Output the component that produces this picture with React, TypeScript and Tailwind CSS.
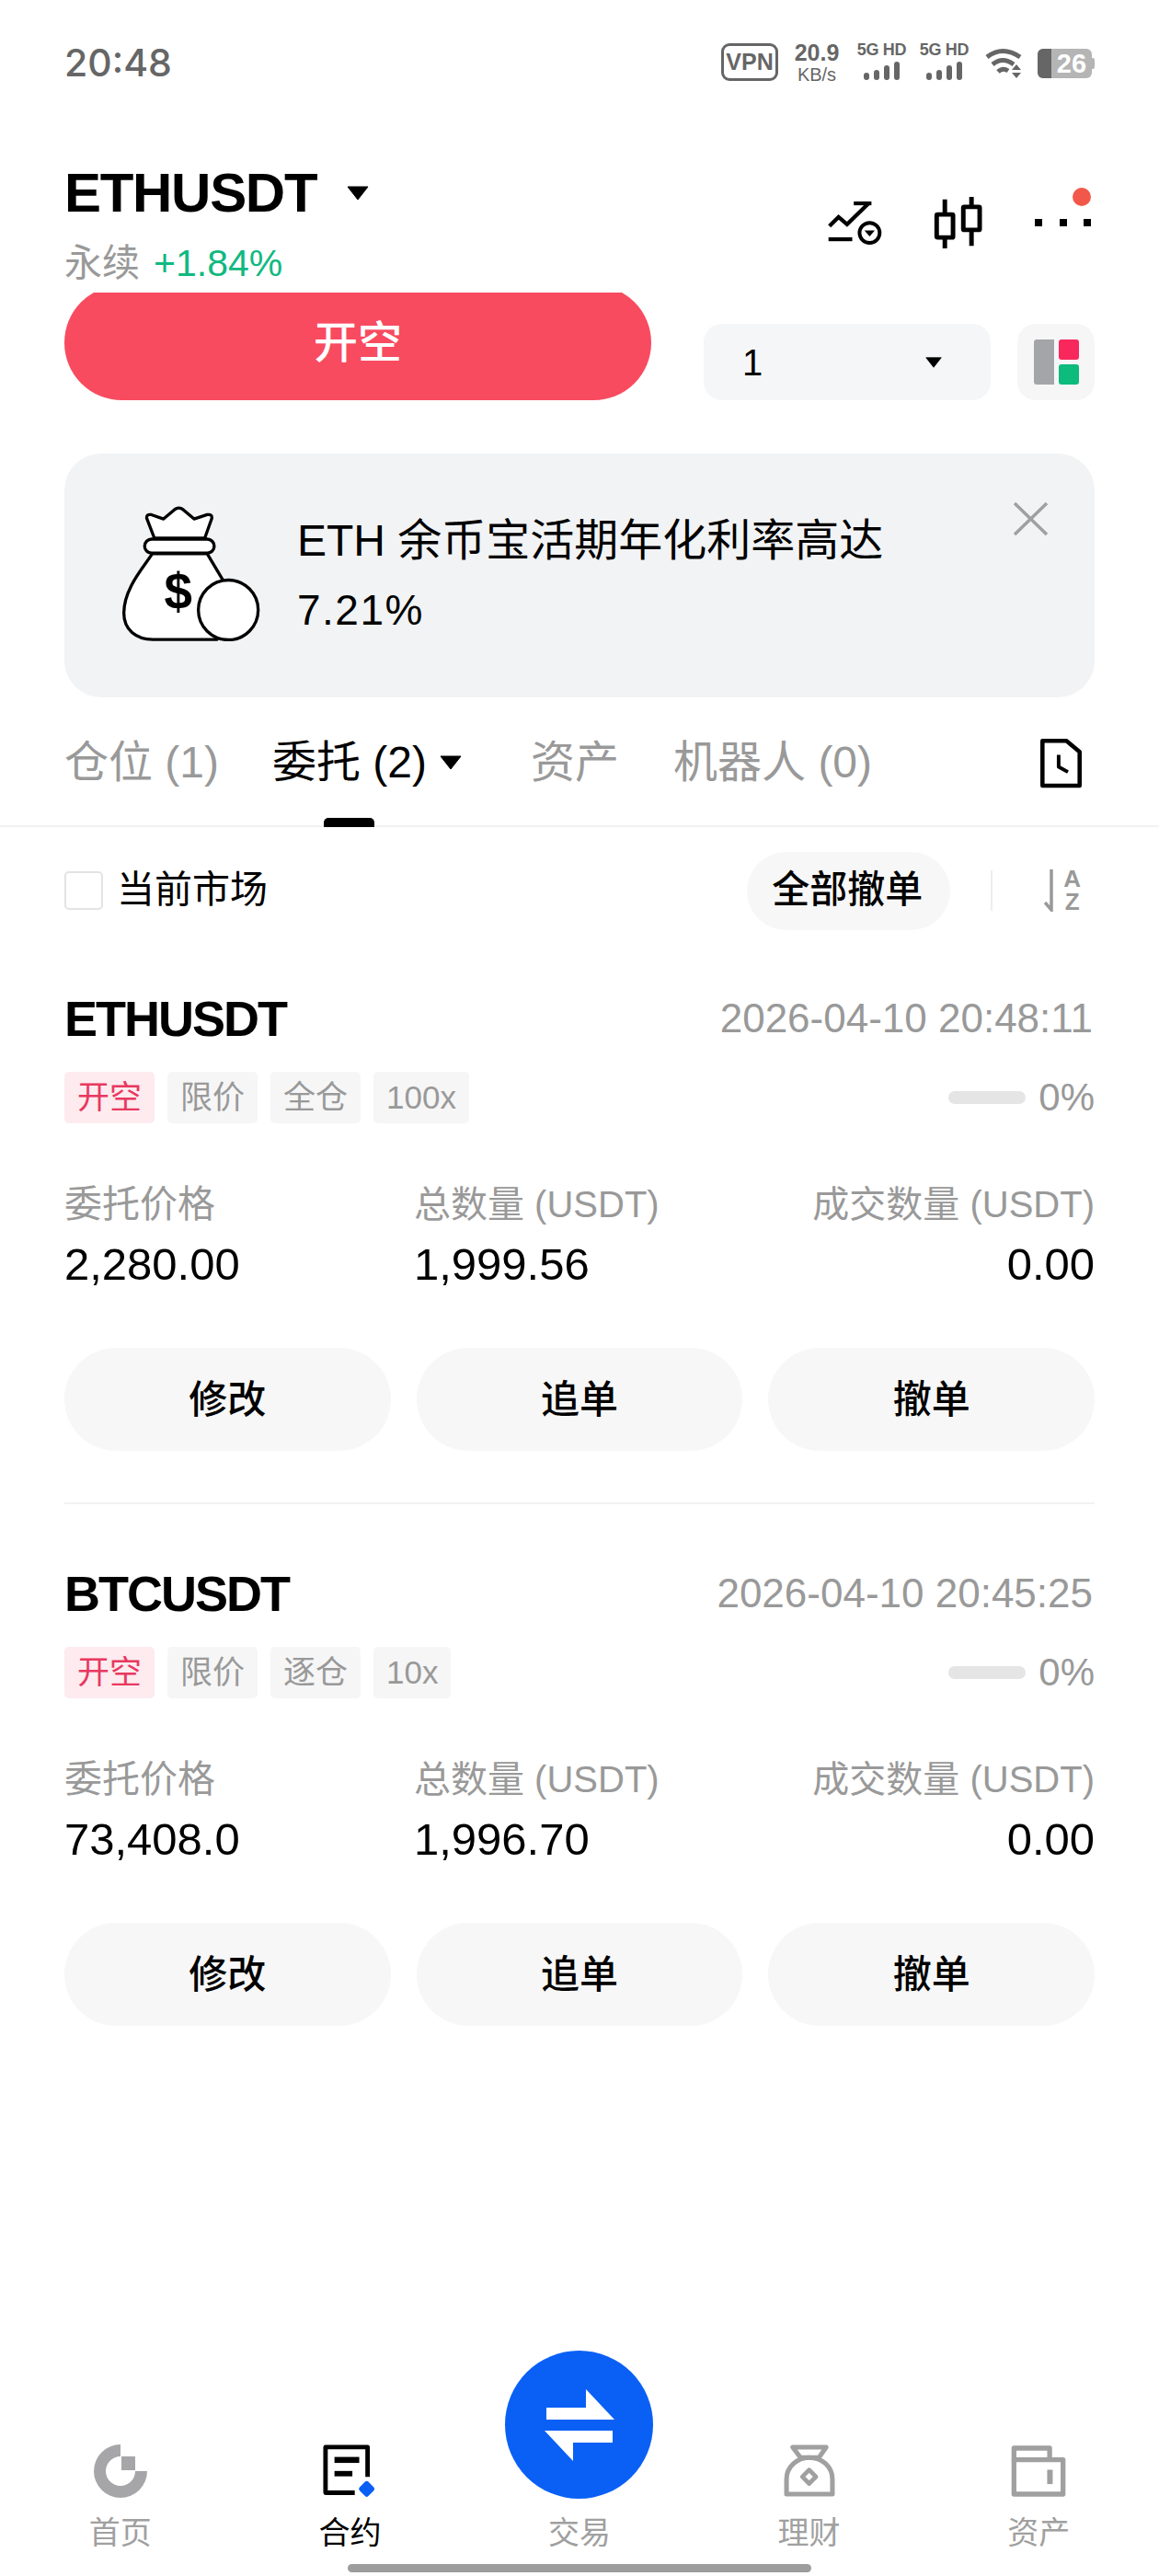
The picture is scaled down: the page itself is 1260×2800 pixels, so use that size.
import type { ReactNode } from "react";

type Order = {
  symbol: string;
  time: string;
  margin: string;
  leverage: string;
  price: string;
  amount: string;
};

const ORDERS: Order[] = [
  { symbol: "ETHUSDT", time: "2026-04-10 20:48:11", margin: "全仓", leverage: "100x", price: "2,280.00", amount: "1,999.56" },
  { symbol: "BTCUSDT", time: "2026-04-10 20:45:25", margin: "逐仓", leverage: "10x", price: "73,408.0", amount: "1,996.70" },
];

function Caret({ className }: { className: string }) {
  return (
    <svg viewBox="0 0 24 16" className={className}>
      <path d="M1 1h22L12 15z" fill="#000" stroke="#000" strokeLinejoin="round" />
    </svg>
  );
}

function Signal() {
  return (
    <div className="flex h-[20px] items-end justify-center gap-[5px]">
      <div className="h-[8px] w-[6px] rounded-[3px] bg-[#666]" />
      <div className="h-[11px] w-[6px] rounded-[3px] bg-[#666]" />
      <div className="h-[16px] w-[6px] rounded-[3px] bg-[#666]" />
      <div className="h-[20px] w-[6px] rounded-[3px] bg-[#666]" />
    </div>
  );
}

function Network() {
  return (
    <div className="flex w-[57px] flex-col gap-[5px]">
      <div className="whitespace-nowrap text-center text-[18px] font-bold leading-[15px] tracking-[-0.3px] text-[#666]">5G HD</div>
      <Signal />
    </div>
  );
}

function StatusBar() {
  return (
    <div className="flex h-[180px] items-start justify-between px-[70px] pt-[47px]">
      <div className="h-[42px] font-['Inter'] text-[41px] font-medium leading-[42px] text-[#666]">20:48</div>
      <div className="flex items-start">
        <div className="flex h-[41px] w-[62px] items-center justify-center rounded-[9px] border-[3px] border-[#666] text-[25px] font-bold text-[#666]">
          VPN
        </div>
        <div className="ml-[16px] -mt-[3px] w-[52px] text-center text-[#666]">
          <div className="text-[25px] font-bold leading-[26px]">20.9</div>
          <div className="text-[20px] leading-[22px]">KB/s</div>
        </div>
        <div className="ml-[16px]">
          <Network />
        </div>
        <div className="ml-[11px]">
          <Network />
        </div>
        <svg viewBox="0 0 42 33" className="ml-[16px] mt-[5px] h-[33px] w-[42px]" fill="none" stroke="#666" strokeWidth="5">
          <path d="M2 10Q19-3 38 10" />
          <path d="M8 18Q19 9 31 18" />
          <path d="M14 26Q19 21 25 25" />
          <path d="M34 18l5 6h-10zM34 33l5-6h-10z" fill="#666" stroke="none" />
        </svg>
        <div className="relative ml-[15px] mt-[6px] flex h-[32px] w-[59px] overflow-hidden rounded-[6px] bg-[#b5b5b5]">
          <div className="h-full w-[15px] bg-[#666]" />
          <div className="flex-1 text-center text-[29px] font-bold leading-[32px] text-white">26</div>
        </div>
        <div className="mt-[16px] h-[12px] w-[3px] rounded-r-[2px] bg-[#b5b5b5]" />
      </div>
    </div>
  );
}

function Header() {
  return (
    <div className="flex items-start justify-between pl-[70px] pr-[74px]">
      <div>
        <div className="flex h-[60px] items-center">
          <span className="text-[60px] font-bold leading-[60px] tracking-[-1.3px] text-black">ETHUSDT</span>
          <Caret className="ml-[33px] h-[16px] w-[24px]" />
        </div>
        <div className="mt-[21px] flex h-[50px] items-center text-[41px] leading-[50px]">
          <span className="text-[#999]">永续</span>
          <span className="ml-[15px] text-[#10b981]">+1.84%</span>
        </div>
      </div>
      <div className="mt-[33px] flex items-center gap-[56px]">
        <svg viewBox="125 85 178 142" className="h-[47px] w-[59px]" fill="none" stroke="#000" strokeWidth="13">
          <path d="M127 209H205" />
          <path d="M130 166L160 136L188 160L258 92" />
          <path d="M210 91H268" />
          <circle cx="262" cy="188" r="33" strokeWidth="12" />
          <path d="M245 180H279L262 200Z" fill="#000" stroke="none" />
        </svg>
        <svg viewBox="468 68 164 174" className="h-[58px] w-[54px]" fill="#fff" stroke="#000" strokeWidth="15">
          <path d="M505 78V240M593 70V232" />
          <rect x="478" y="128" width="54" height="76" rx="3" />
          <rect x="566" y="103" width="54" height="76" rx="3" />
        </svg>
        <div className="relative flex h-[8px] w-[61px] justify-between">
          <div className="h-[8px] w-[8px] bg-black" />
          <div className="h-[8px] w-[8px] bg-black" />
          <div className="h-[8px] w-[8px] bg-black" />
          <div className="absolute -top-[34px] right-0 h-[20px] w-[20px] rounded-full bg-[#f2584a]" />
        </div>
      </div>
    </div>
  );
}

function OrderBar() {
  return (
    <div className="mt-[7px] flex items-start px-[70px]">
      <div className="h-[117px] w-[638px] overflow-hidden">
        <div className="-mt-[8px] flex h-[125px] items-center justify-center rounded-full bg-[#f84b60] text-[48px] font-medium text-white">
          开空
        </div>
      </div>
      <div className="ml-[57px] mt-[34px] flex h-[83px] w-[312px] items-center justify-between rounded-[20px] bg-[#f5f6f7] pl-[42px] pr-[53px]">
        <span className="text-[40px] text-black">1</span>
        <Caret className="h-[14px] w-[18px]" />
      </div>
      <div className="ml-[29px] mt-[34px] flex h-[83px] w-[84px] items-center justify-center gap-[5px] rounded-[20px] bg-[#f6f6f7]">
        <div className="h-[49px] w-[22px] rounded-l-[3px] bg-[#a3a5a9]" />
        <div className="flex flex-col gap-[5px]">
          <div className="h-[22px] w-[22px] rounded-[3px] bg-[#f9285c]" />
          <div className="h-[22px] w-[22px] rounded-[3px] bg-[#0dbb7c]" />
        </div>
      </div>
    </div>
  );
}

function MoneyBag() {
  return (
    <svg viewBox="100 60 452 442" className="h-[147px] w-[150px] shrink-0" fill="#fff" stroke="#000" strokeWidth="10" strokeLinejoin="round">
      <path d="M205 165L180 100Q178 85 195 88L235 102L270 72Q285 60 300 72L335 102L378 88Q395 85 393 100L370 165Z" />
      <path d="M198 216C170 260 105 330 105 410C105 465 145 497 200 497H410L440 320L378 216Z" />
      <rect x="173" y="168" width="228" height="46" rx="23" />
      <text x="283" y="396" textAnchor="middle" fontSize="165" fontWeight="700" fill="#000" stroke="none">
        $
      </text>
      <circle cx="447" cy="400" r="98" />
    </svg>
  );
}

function Banner() {
  return (
    <div className="mx-[70px] mt-[58px] flex h-[265px] items-start rounded-[40px] bg-[#f2f3f5] pl-[63px] pr-[50px] pt-[57px]">
      <MoneyBag />
      <div className="ml-[40px] text-black">
        <div className="mt-[5px] h-[66px] whitespace-nowrap text-[48px] leading-[66px]">ETH 余币宝活期年化利率高达</div>
        <div className="mt-[9px] text-[46px] leading-[66px] tracking-[1.5px]">7.21%</div>
      </div>
      <svg viewBox="0 0 39 38" className="ml-auto -mt-[5px] h-[38px] w-[39px] shrink-0" stroke="#a0a0a0" strokeWidth="3.5">
        <path d="M2 2L37 36M37 2L2 36" />
      </svg>
    </div>
  );
}

function Tabs() {
  return (
    <div className="mt-px flex h-[140px] items-center border-b-2 border-[#f2f2f2] px-[70px] pt-[2px] text-[48px] leading-[60px] text-[#999]">
      <span className="whitespace-nowrap">仓位 (1)</span>
      <div className="relative ml-[58px] flex h-full items-center text-black">
        <span className="whitespace-nowrap">委托 (2)</span>
        <Caret className="ml-[14px] h-[16px] w-[24px]" />
        <div className="absolute -bottom-[2px] left-[56px] h-[10px] w-[55px] rounded-t-[5px] bg-black" />
      </div>
      <span className="ml-[75px] whitespace-nowrap">资产</span>
      <span className="ml-[59px] whitespace-nowrap">机器人 (0)</span>
      <svg viewBox="240 55 150 175" className="ml-auto mr-[12px] h-[57px] w-[49px]" fill="none" stroke="#000" strokeWidth="14" strokeLinejoin="round">
        <path d="M253 68H333L377 105V218H253Z" />
        <path d="M307 115V155L338 172" strokeWidth="12" />
      </svg>
    </div>
  );
}

function Filter() {
  return (
    <div className="flex h-[138px] items-center px-[70px]">
      <div className="h-[42px] w-[42px] rounded-[5px] border-2 border-[#e3e3e3]" />
      <span className="ml-[15px] text-[41px] text-black">当前市场</span>
      <div className="ml-auto flex h-[85px] w-[221px] items-center justify-center rounded-full bg-[#f7f7f7] pr-[3px] text-[41px] font-medium text-black">
        全部撤单
      </div>
      <div className="ml-[44px] h-[44px] w-[2px] bg-[#eeeeee]" />
      <div className="ml-[56px] mr-[15px] flex items-center gap-[9px]">
        <svg viewBox="0 0 12 46" className="h-[46px] w-[12px]" fill="none" stroke="#999" strokeWidth="3.5">
          <path d="M8 0V44L1 36" />
        </svg>
        <div className="flex flex-col text-center text-[26px] font-bold leading-[25px] text-[#999]">
          <span>A</span>
          <span>Z</span>
        </div>
      </div>
    </div>
  );
}

function Tag({ red, children }: { red?: boolean; children: ReactNode }) {
  return (
    <div
      className={`flex h-[56px] items-center justify-center rounded-[5px] px-[14px] text-[35px] ${
        red ? "bg-[#fdebef] text-[#e8395f]" : "bg-[#f6f6f6] text-[#999]"
      }`}
    >
      {children}
    </div>
  );
}

function ActionButton({ children }: { children: ReactNode }) {
  return (
    <div className="flex h-[112px] items-center justify-center rounded-full bg-[#f7f7f7] text-[42px] font-medium text-black">
      {children}
    </div>
  );
}

function OrderCard({ order }: { order: Order }) {
  return (
    <div>
      <div className="flex h-[60px] items-center justify-between">
        <span className="text-[54px] font-bold leading-[60px] tracking-[-2px] text-black">{order.symbol}</span>
        <span className="pr-[2px] text-[44px] leading-[60px] text-[#999]">{order.time}</span>
      </div>
      <div className="mt-[28px] flex items-center gap-[14px]">
        <Tag red>开空</Tag>
        <Tag>限价</Tag>
        <Tag>{order.margin}</Tag>
        <Tag>{order.leverage}</Tag>
        <div className="ml-auto h-[14px] w-[84px] rounded-full bg-[#e5e5e5]" />
        <span className="text-[42px] leading-[56px] text-[#999]">0%</span>
      </div>
      <div className="mt-[63px] grid grid-cols-[380px_1fr_auto]">
        <div className="text-[41px] leading-[50px] text-[#999]">委托价格</div>
        <div className="whitespace-nowrap text-[40px] leading-[50px] text-[#999]">总数量 (USDT)</div>
        <div className="whitespace-nowrap text-right text-[40px] leading-[50px] text-[#999]">成交数量 (USDT)</div>
        <div className="mt-[10px] text-[49px] leading-[60px] text-black">{order.price}</div>
        <div className="mt-[10px] text-[49px] leading-[60px] text-black">{order.amount}</div>
        <div className="mt-[10px] text-right text-[49px] leading-[60px] text-black">0.00</div>
      </div>
      <div className="mt-[61px] grid grid-cols-3 gap-[28px]">
        <ActionButton>修改</ActionButton>
        <ActionButton>追单</ActionButton>
        <ActionButton>撤单</ActionButton>
      </div>
    </div>
  );
}

function NavItem({ label, active, children }: { label: string; active?: boolean; children: ReactNode }) {
  return (
    <div className="flex flex-col items-center">
      {children}
      <div className={`mt-[17px] h-[40px] text-[34px] leading-[40px] ${active ? "text-black" : "text-[#a0a0a0]"}`}>{label}</div>
    </div>
  );
}

function BottomNav() {
  return (
    <div className="mt-auto">
      <div className="grid grid-cols-5 items-end px-[6px]">
        <NavItem label="首页">
          <svg viewBox="0 0 58 58" className="h-[60px] w-[58px] py-px" fill="#a6a6a8">
            <path d="M29 0A29 29 0 1 0 58 29H45A16 16 0 1 1 29 13Z" />
            <rect x="30" y="13" width="15" height="15" />
          </svg>
        </NavItem>
        <NavItem label="合约" active>
          <svg viewBox="870 48 185 185" className="h-[60px] w-[60px]" fill="none" stroke="#000" strokeWidth="15" strokeLinejoin="round">
            <path d="M1023 160V60H882V213H980" />
            <rect x="912" y="93" width="83" height="20" fill="#000" stroke="none" />
            <rect x="912" y="140" width="60" height="18" fill="#000" stroke="none" />
            <path d="M1020 182L1038 200L1020 218L1002 200Z" fill="#0a60f5" stroke="#0a60f5" strokeWidth="16" />
          </svg>
        </NavItem>
        <NavItem label="交易">
          <div className="flex h-[161px] w-[161px] items-center justify-center rounded-full bg-[#0a60f5]">
            <svg viewBox="591 2598 76 78" className="h-[78px] w-[76px]" fill="#fff">
              <path d="M593 2618H636V2598L667 2631H593Z" />
              <path d="M591 2643H665V2656H622V2676Z" />
            </svg>
          </div>
        </NavItem>
        <NavItem label="理财">
          <svg viewBox="205 50 178 178" className="h-[60px] w-[60px]" fill="none" stroke="#a0a0a0" strokeWidth="15" strokeLinejoin="round">
            <path d="M240 62H348L325 95H265Z" />
            <path d="M220 213V165C220 125 255 95 293 95C335 95 368 125 368 165V213Z" />
            <path d="M293 135L315 157L293 179L271 157Z" strokeWidth="14" />
          </svg>
        </NavItem>
        <NavItem label="资产">
          <svg viewBox="950 50 190 175" className="my-px h-[58px] w-[63px]" fill="none" stroke="#a0a0a0" strokeWidth="16" strokeLinejoin="round">
            <path d="M963 100V62H1080V100" />
            <path d="M963 100H1124V213H963Z" />
            <rect x="1072" y="133" width="18" height="47" fill="#a0a0a0" stroke="none" />
          </svg>
        </NavItem>
      </div>
      <div className="mx-auto mb-[4px] mt-[14px] h-[9px] w-[504px] rounded-full bg-[#9d9d9d]" />
    </div>
  );
}

export default function App() {
  return (
    <div className="flex min-h-[2800px] flex-col bg-white [font-family:'Liberation_Sans','Noto_Sans_CJK_SC',sans-serif]">
      <StatusBar />
      <Header />
      <OrderBar />
      <Banner />
      <Tabs />
      <Filter />
      <div className="px-[70px] pt-[40px]">
        {ORDERS.map((order, i) => (
          <div key={order.symbol}>
            {i > 0 && <div className="mb-[67px] mt-[56px] h-[2px] bg-[#f2f2f2]" />}
            <OrderCard order={order} />
          </div>
        ))}
      </div>
      <BottomNav />
    </div>
  );
}
